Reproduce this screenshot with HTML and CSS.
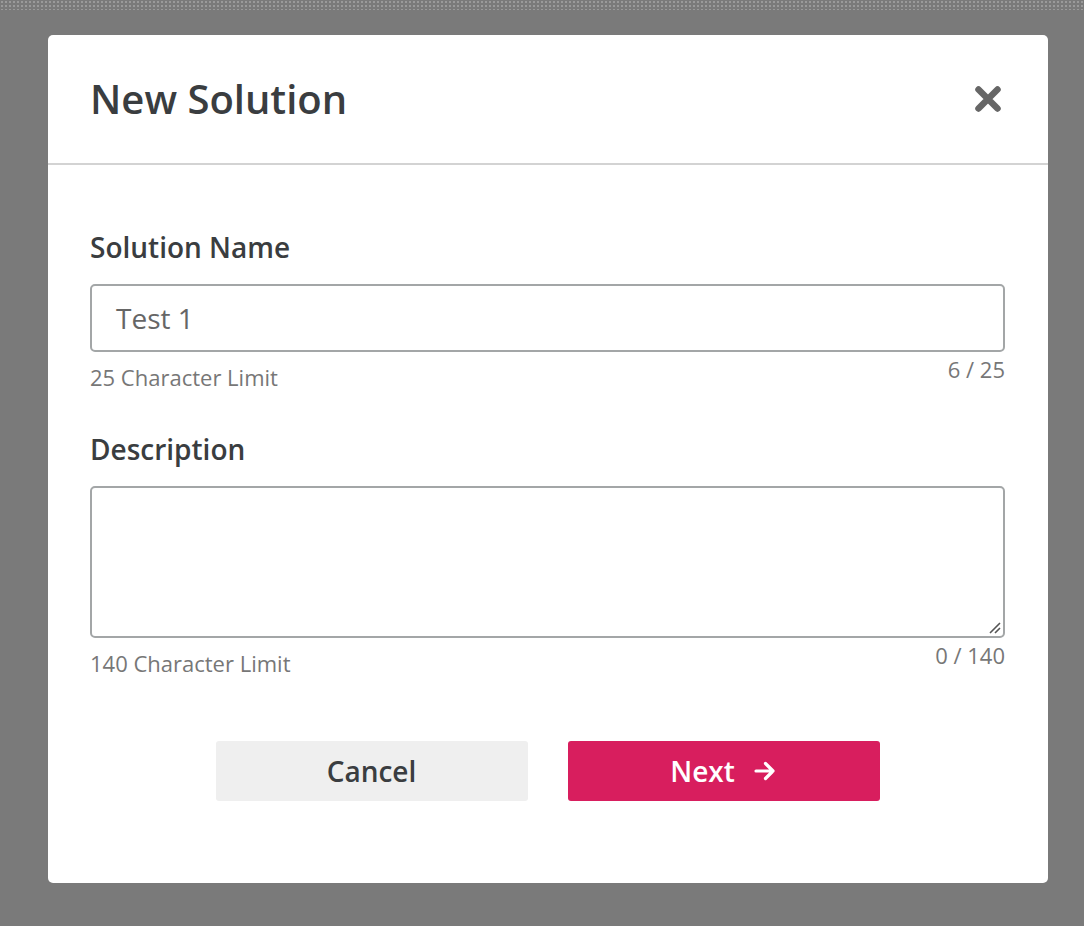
FILE: index.html
```html
<!DOCTYPE html>
<html>
<head>
<meta charset="utf-8">
<link rel="stylesheet" href="styles.css">
</head>
<body>
<div class="backdrop">
  <div class="topstrip"></div>
  <div class="modal">
    <div class="modal-header">
      <h1 class="title">New Solution</h1>
      <button class="close" aria-label="Close">
        <svg width="28" height="28" viewBox="0 0 28 28"><path d="M4.5 4.5 L23.5 23.5 M23.5 4.5 L4.5 23.5" stroke="#666" stroke-width="6.5" stroke-linecap="round"/></svg>
      </button>
    </div>
    <div class="modal-body">
      <div class="field">
        <label class="label">Solution Name</label>
        <div class="input">Test 1</div>
        <div class="hints">
          <span class="hint">25 Character Limit</span>
          <span class="count">6 / 25</span>
        </div>
      </div>
      <div class="field field-desc">
        <label class="label">Description</label>
        <div class="textarea">
          <svg class="grip" width="14" height="14" viewBox="0 0 14 14"><path d="M2 12 L12 2 M7 12 L12 7" stroke="#555" stroke-width="1.6"/></svg>
        </div>
        <div class="hints">
          <span class="hint">140 Character Limit</span>
          <span class="count">0 / 140</span>
        </div>
      </div>
      <div class="actions">
        <button class="btn btn-cancel">Cancel</button>
        <button class="btn btn-next">Next
          <svg width="24" height="22" viewBox="0 0 24 22"><path d="M3 11 H20 M12.5 3.5 L20 11 L12.5 18.5" stroke="#fff" stroke-width="3.2" fill="none" stroke-linecap="round" stroke-linejoin="round"/></svg>
        </button>
      </div>
    </div>
  </div>
</div>
</body>
</html>
```
FILE: styles.css
```css
html, body {
  margin: 0;
  padding: 0;
}
body {
  font-family: "Open Sans", "Liberation Sans", sans-serif;
  background: #7a7a7a;
  width: 1084px;
  height: 926px;
  overflow: hidden;
}
.backdrop {
  position: relative;
  height: 926px;
  display: flex;
  flex-direction: column;
  align-items: center;
}
.topstrip {
  position: absolute;
  left: 0;
  top: 0;
  width: 100%;
  height: 10px;
  background-image: radial-gradient(circle, #9a9a9a 0.8px, transparent 1px);
  background-size: 4px 4px;
}
.modal {
  margin-top: 35px;
  margin-left: 12px;
  width: 1000px;
  height: 848px;
  background: #fff;
  border-radius: 5px;
  box-sizing: border-box;
}
.modal-header {
  height: 128px;
  border-bottom: 2px solid #d3d3d3;
  display: flex;
  align-items: center;
  justify-content: space-between;
  padding: 0 46px 0 42px;
}
.title {
  margin: 0;
  font-size: 40px;
  font-weight: 600;
  color: #3a3d40;
  letter-spacing: 0;
  padding-bottom: 2px;
}
.close {
  border: 0;
  background: none;
  padding: 0;
  width: 28px;
  height: 28px;
  display: flex;
  cursor: pointer;
}
.modal-body {
  padding: 65px 43px 0 42px;
}
.field {
  display: flex;
  flex-direction: column;
}
.label {
  font-size: 28px;
  font-weight: 600;
  color: #3a3d40;
  line-height: 34px;
  margin-bottom: 20px;
}
.input {
  height: 68px;
  box-sizing: border-box;
  border: 2px solid #a3a6a7;
  border-radius: 5px;
  padding: 0 24px;
  display: flex;
  align-items: center;
  font-size: 28px;
  color: #666;
}
.textarea {
  position: relative;
  height: 152px;
  box-sizing: border-box;
  border: 2px solid #a3a6a7;
  border-radius: 5px;
}
.grip {
  position: absolute;
  right: 1px;
  bottom: 1px;
}
.hints {
  display: flex;
  justify-content: space-between;
  align-items: flex-start;
  color: #777;
  font-size: 22px;
  line-height: 26px;
}
.hint {
  padding-top: 12px;
}
.count {
  padding-top: 4px;
}
.field-desc {
  margin-top: 42px;
}
.actions {
  display: flex;
  justify-content: center;
  gap: 40px;
  margin-top: 65px;
}
.btn {
  width: 312px;
  height: 60px;
  border: 0;
  border-radius: 3px;
  font-family: "Open Sans", "Liberation Sans", sans-serif;
  font-size: 28px;
  font-weight: 600;
  display: flex;
  align-items: center;
  justify-content: center;
  gap: 18px;
  cursor: pointer;
}
.btn-cancel {
  background: #efefef;
  color: #3a3d40;
}
.btn-next {
  background: #d81e5e;
  color: #fff;
}
```
